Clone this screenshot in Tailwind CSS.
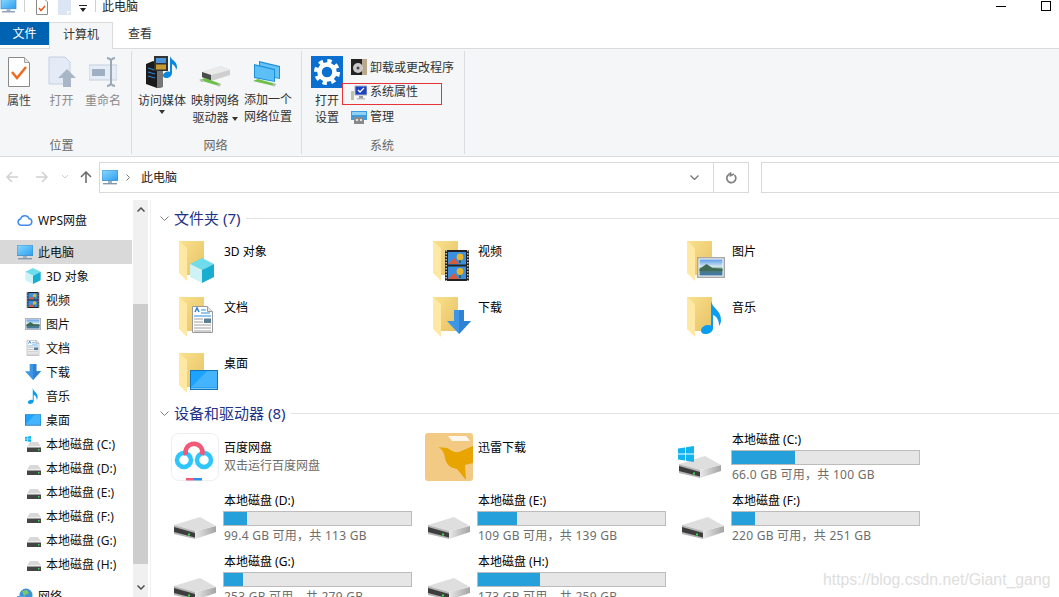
<!DOCTYPE html>
<html lang="en">
<head>
  <meta charset="UTF-8" />
  <title>此电脑</title>
  <script src="https://cdn.jsdelivr.net/npm/@tailwindcss/browser@4"></script>
</head>
<body class="bg-white text-black text-[12px] leading-[18px] font-['Noto_Sans','Noto_Sans_CJK_SC',sans-serif]">

<!-- shared icons -->
<svg class="absolute w-0 h-0" aria-hidden="true">
  <defs>
    <linearGradient id="gFolder" x1="0" x2="1" y1="0" y2="1"><stop offset="0" stop-color="#fae08f"/><stop offset="1" stop-color="#e6c263"/></linearGradient>
    <linearGradient id="gScreen" x1="0" x2="1" y1="0" y2="1"><stop offset="0" stop-color="#8bd8ff"/><stop offset="1" stop-color="#2a9ff0"/></linearGradient>
    <linearGradient id="gDriveSide" x1="0" x2="1" y1="0" y2="0"><stop offset="0" stop-color="#e8e8e8"/><stop offset="1" stop-color="#a4a4a4"/></linearGradient>
    <linearGradient id="gSky" x1="0" x2="0" y1="0" y2="1"><stop offset="0" stop-color="#5e9bea"/><stop offset=".45" stop-color="#d3e8ee"/><stop offset=".6" stop-color="#4f7a6a"/><stop offset="1" stop-color="#3f78ae"/></linearGradient>
  </defs>
  <symbol id="folder" viewBox="0 0 25 40">
    <path d="M0 0h25v34H8z" fill="url(#gFolder)"/>
    <path d="M0 0l8 7v33l-8-8z" fill="#ffe8a3"/>
  </symbol>
  <symbol id="monitor" viewBox="0 0 16 15">
    <rect x="0" y="0" width="16" height="10.5" fill="url(#gScreen)" stroke="#3d8bc4" stroke-width=".8"/>
    <rect x="6" y="11" width="4" height="2" fill="#9fb2c4"/>
    <rect x="1" y="13" width="14" height="1.4" fill="#8297ad"/>
  </symbol>
  <symbol id="cube" viewBox="0 0 24 25">
    <path d="M12 0l12 6-12 6L0 6z" fill="#6fdcec"/>
    <path d="M0 6l12 6v13L0 19z" fill="#cdf3f6"/>
    <path d="M24 6l-12 6v13l12-6z" fill="#19aed0"/>
  </symbol>
  <symbol id="film" viewBox="0 0 24 31">
    <rect width="24" height="31" fill="#222"/>
    <rect x="3" y="2" width="18" height="12.5" fill="#3a8fe0"/>
    <rect x="3" y="16.5" width="18" height="12.5" fill="#3a8fe0"/>
    <path d="M3 14l6-6 5 6zM3 29l6-6 5 6z" fill="#d65a3c"/>
    <circle cx="15" cy="7" r="3.4" fill="#e7b62c"/><circle cx="15" cy="21.5" r="3.4" fill="#e7b62c"/>
    <path d="M15 10v3M15 25v3" stroke="#2a5a2a" stroke-width="1.5"/>
    <path d="M1.200 0v31M22.800 0v31" stroke="#c8c8c8" stroke-width="1.500" stroke-dasharray="1.500 1.500"/>
  </symbol>
  <symbol id="picture" viewBox="0 0 28 21">
    <rect x=".75" y=".75" width="26.5" height="19.5" fill="#fff" stroke="#a8a8a8" stroke-width="1.5"/>
    <rect x="2.500" y="2.500" width="23" height="16" fill="url(#gSky)"/>
    <path d="M2.500 12l7-5 6 4 10 1v2H2.500z" fill="#3f6a55"/>
  </symbol>
  <symbol id="doc" viewBox="0 0 21 27">
    <path d="M.5.5h15l5 5v21H.5z" fill="#fff" stroke="#9a9a9a"/>
    <path d="M15.500.5v5h5" fill="#e6e6e6" stroke="#9a9a9a"/>
    <path d="M3 6l2-4 2 4" fill="none" stroke="#2b7fd0" stroke-width="1.500"/>
    <path d="M9 4h5M9 7h9M2 10h17" stroke="#2b8fdc" stroke-width="1"/>
    <path d="M2 13h9M2 16h9M2 19h17M2 22h17M2 25h17" stroke="#a0a0a0" stroke-width="1"/>
    <rect x="12" y="12.500" width="7" height="4.500" fill="#5c7f96"/>
  </symbol>
  <symbol id="down" viewBox="0 0 24 24">
    <path d="M7 0h10v11h7L12 24 0 11h7z" fill="#3d97e6"/>
    <path d="M12 0h5v11h7L12 24z" fill="#2f83d2"/>
  </symbol>
  <symbol id="note" viewBox="0 0 21 33">
    <path d="M10 0c1 7 10 9 10 19 0 2-.5 4-2 6 .5-6-3-10-6-11v13c0 4-4 6-8 6-3 0-4-2-4-3.500C0 26 4 24 7 24c1 0 2 .2 3 .6z" fill="#0a9df0"/>
  </symbol>
  <symbol id="desktop" viewBox="0 0 28 20">
    <rect width="28" height="20" fill="#1274b8"/>
    <rect x="1" y="1" width="26" height="16.500" fill="#1ca3ff"/>
    <path d="M1 17.500L17 1h10v16.500z" fill="#45b4ff"/>
    <rect x="1" y="18" width="26" height="1" fill="#7cc8f5"/>
  </symbol>
  <symbol id="drive" viewBox="0 0 42 22">
    <path d="M21 14l21-5v6l-21 7z" fill="url(#gDriveSide)"/>
    <path d="M0 8L26 0l16 9-21 5z" fill="#dedede"/>
    <path d="M0 8l21 6v8L0 17z" fill="#b5b5b5"/>
    <path d="M0 10l21 6v4.500L0 15z" fill="#3d3d3d"/>
    <rect x="14" y="16.500" width="2" height="2" fill="#3ddc4a"/>
  </symbol>
  <symbol id="driveSmall" viewBox="0 0 14 10">
    <path d="M3 0h8l3 4.500H0z" fill="#d8d8d8"/>
    <rect x="0" y="4.500" width="14" height="1" fill="#f4f4f4"/>
    <rect x="0" y="5.500" width="14" height="4.500" fill="#454545"/>
    <rect x="11" y="7" width="1.500" height="1.500" fill="#3ddc4a"/>
  </symbol>
  <symbol id="winlogo" viewBox="0 0 16 16">
    <path d="M0 2.500l7-1V7.500H0zM8 1.300L16 0v7.500H8zM0 8.500h7v6l-7-1zM8 8.500h8V16l-8-1.300z" fill="#12b4ef"/>
  </symbol>
</svg>

<div class="relative w-[1059px] h-[597px] overflow-hidden">

  <!-- Title bar -->
  <div class="h-[22px] flex items-start">
    <svg class="w-[17px] h-[14px] mt-[-1px]"><use href="#monitor"/></svg>
    <div class="ml-[7px] w-px h-[12px] bg-[#d0d0d0]"></div>
    <svg class="ml-[11px] w-[12px] h-[15px]" viewBox="0 0 12 15"><path d="M.5-1h8l3 3v12.500H.5z" fill="#fff" stroke="#8c8c8c"/><path d="M3 8l2 2.500L9 6" fill="none" stroke="#e8591c" stroke-width="1.500"/></svg>
    <svg class="ml-[10px] w-[13px] h-[15px]" viewBox="0 0 13 15"><path d="M0 0h13v15H0z" fill="#dbe5f4"/><path d="M9 15v-4h4z" fill="#f4f7fc"/></svg>
    <svg class="ml-[8px] mt-[5px] w-[8px] h-[7px]" viewBox="0 0 8 7"><path d="M0 0h8v1H0zM1 3h6L4 7z" fill="#222"/></svg>
    <div class="ml-[8px] w-px h-[12px] bg-[#d0d0d0]"></div>
    <span class="ml-[6px] mt-[-2px] text-[#222]">此电脑</span>
    <div class="ml-auto mt-[6px] w-[10px] h-px bg-black"></div>
    <div class="ml-[35px] mr-[8px] mt-px w-[10px] h-[10px] border border-black"></div>
  </div>

  <!-- Tabs -->
  <div class="h-[26px] flex items-start relative z-10">
    <div class="w-[49px] h-[23px] bg-[#0063b1] text-white flex items-center justify-center">文件</div>
    <div class="w-[64px] h-[27px] bg-[#f5f6f7] border-x border-t border-[#dadbdc] flex items-center justify-center pb-[3px] text-[#333]">计算机</div>
    <div class="w-[54px] h-[23px] flex items-center justify-center text-[#333]">查看</div>
  </div>

  <!-- Ribbon -->
  <div class="h-[109px] bg-[#f5f6f7] border-y border-[#dadbdc] flex text-[#444] leading-[17px]">
    <section class="w-[132px] my-[2px] border-r border-[#dcdde0] flex flex-col justify-between">
      <div class="flex mt-[5px]">
        <div class="w-[38px] flex flex-col items-center">
          <svg class="w-[22px] h-[32px]" viewBox="0 0 22 32"><path d="M.5 1.500h16l5 5v24H.5z" fill="#fff" stroke="#8a8a8a"/><path d="M16.500 1.500v5h5" fill="#e8e8e8" stroke="#a0a0a0"/><path d="M4 16l5 6 9-11" fill="none" stroke="#ee6a21" stroke-width="2.500"/></svg>
          <span class="mt-[4px]">属性</span>
        </div>
        <div class="w-[47px] flex flex-col items-center text-[#8a8a8a]">
          <svg class="w-[28px] h-[32px]" viewBox="0 0 28 32"><path d="M1 1h16l5 5v14h-6v8H1z" fill="#e4ebf6" stroke="#c4cfe0"/><path d="M19 13l9 9h-5v9h-8v-9h-5z" fill="#a9b6c6"/></svg>
          <span class="mt-[4px]">打开</span>
        </div>
        <div class="w-[36px] flex flex-col items-center text-[#8a8a8a]">
          <svg class="w-[28px] h-[32px]" viewBox="0 0 28 32"><rect x="0" y="9" width="28" height="15" fill="#e6edf6" stroke="#c4cfe0"/><rect x="3" y="13" width="13" height="7" fill="#9fb0c4"/><path d="M18 2c2 0 3 1 4 2 1-1 2-2 4-2M22 4v24M18 30c2 0 3-1 4-2 1 1 2 2 4 2" fill="none" stroke="#9aa8b8" stroke-width="2"/></svg>
          <span class="mt-[4px]">重命名</span>
        </div>
      </div>
      <div class="text-center text-[#666] pr-[8px]">位置</div>
    </section>

    <section class="w-[170px] my-[2px] border-r border-[#dcdde0] flex flex-col justify-between">
      <div class="flex gap-[5px] pl-[6px] mt-[4px]">
        <div class="w-[48px] flex flex-col items-center text-[#333]">
          <svg class="w-[32px] h-[33px]" viewBox="0 0 32 33">
            <path d="M0 9l7-3 10 4v22l-6 1-11-4z" fill="#1b1b1b"/><path d="M11 13l6-3v22l-6 1z" fill="#777"/>
            <path d="M2 13l7 2M2 17l7 2M2 21l7 2" stroke="#2b86d8" stroke-width="1.200"/>
            <rect x="8" y="1" width="14" height="15" fill="#333"/><rect x="10" y="3" width="10" height="5" fill="#4b94d8"/><rect x="10" y="9.500" width="10" height="5" fill="#c99a30"/>
            <path d="M24 1c1 4 7 5 7 11 0 1-.3 2-1 3 .2-3-2-5-4-6v9c0 3-3 5-6 5-2 0-3-1-3-2.500 0-2 3-4 5-4 .7 0 1.400.1 2 .4z" fill="#0a88dc"/>
          </svg>
          <span class="mt-[4px]">访问媒体</span>
          <svg class="mt-px w-[6px] h-[4px]" viewBox="0 0 6 4"><path d="M0 0h6L3 4z" fill="#333"/></svg>
        </div>
        <div class="w-[48px] flex flex-col items-center text-[#333] text-center">
          <svg class="mt-[8px] w-[32px] h-[24px]" viewBox="0 0 32 24">
            <path d="M3 9L22 3l9 4v5L12 18 3 14z" fill="#cfcfcf"/><path d="M3 9L22 3l9 4-19 5z" fill="#eaeaea"/><path d="M3 9l9 3v6l-9-4z" fill="#4a4a4a"/>
            <path d="M0 17l6-2 16 6-2 2z" fill="#6cc04a"/><circle cx="3" cy="17.500" r="1.500" fill="#bbb"/><circle cx="20" cy="22" r="1.500" fill="#bbb"/>
          </svg>
          <span class="mt-[5px]">映射网络</span>
          <span>驱动器 <svg class="inline w-[6px] h-[4px] align-middle" viewBox="0 0 6 4"><path d="M0 0h6L3 4z" fill="#333"/></svg></span>
        </div>
        <div class="w-[48px] flex flex-col items-center text-[#333] text-center">
          <svg class="mt-[6px] w-[30px] h-[26px]" viewBox="0 0 30 26">
            <path d="M6 0l21 5v13L6 14z" fill="#1c8fdc"/><path d="M7 1.500l19 4.500v11L7 13z" fill="#66c2f4"/>
            <path d="M1 3l21 5v13L1 17z" fill="#1c8fdc"/><path d="M2 4.500l19 4.500v11L2 16z" fill="#5cc0f6"/>
            <path d="M0 20l5-2 18 5-2 2z" fill="#6cc04a"/><circle cx="21" cy="24" r="1.500" fill="#bbb"/>
          </svg>
          <span class="mt-[4px]">添加一个</span>
          <span>网络位置</span>
        </div>
      </div>
      <div class="text-center text-[#666] pr-[2px]">网络</div>
    </section>

    <section class="w-[163px] my-[2px] border-r border-[#dcdde0] flex flex-col justify-between">
      <div class="flex mt-[5px]">
        <div class="ml-[9px] w-[32px] flex flex-col items-center text-[#333]">
          <svg class="w-[32px] h-[32px] bg-[#0a6fd0]" viewBox="0 0 32 32">
            <circle cx="16" cy="16" r="7.500" fill="none" stroke="#fff" stroke-width="4.500"/>
            <circle cx="16" cy="16" r="11" fill="none" stroke="#fff" stroke-width="4" stroke-dasharray="4.320 4.320"/>
          </svg>
          <span class="mt-[4px]">打开</span>
          <span>设置</span>
        </div>
        <div class="w-[100px] -ml-px text-[#333]">
          <div class="h-[22px] flex items-center pl-[9px]">
            <svg class="shrink-0 w-[16px] h-[16px]" viewBox="0 0 16 16"><rect width="16" height="16" fill="#222"/><rect x="11" width="5" height="16" fill="#b9a88a"/><circle cx="7" cy="9" r="5" fill="#c9c9c9"/><circle cx="7" cy="9" r="1.500" fill="#444"/></svg>
            <span class="ml-[3px] whitespace-nowrap">卸载或更改程序</span>
          </div>
          <div class="h-[22px] mt-[5px] flex items-center pl-[8px] pb-[2px] border border-[#e8333a]">
            <svg class="shrink-0 w-[16px] h-[16px]" viewBox="0 0 16 16"><rect x="4" y="1" width="12" height="9" fill="#1a3fc0" stroke="#aab4c4"/><path d="M7 5l2 2 4-4" fill="none" stroke="#fff" stroke-width="1.300"/><rect x="8" y="11" width="4" height="2" fill="#999"/><rect x="6" y="13" width="8" height="1.500" fill="#bbb"/><rect x="0" y="6" width="3" height="9" fill="#b9c4a8"/></svg>
            <span class="ml-[3px] mb-[3px]">系统属性</span>
          </div>
          <div class="h-[22px] mt-px flex items-center pl-[9px]">
            <svg class="shrink-0 w-[16px] h-[16px]" viewBox="0 0 16 16"><path d="M0 2h16v9H0z" fill="#3d9be0"/><path d="M1 3h14v3H1z" fill="#8fd0f5"/><rect x="3" y="8" width="10" height="7" fill="#8a8a8a"/><circle cx="6" cy="11" r="1" fill="#fff"/><circle cx="10" cy="11" r="1" fill="#fff"/></svg>
            <span class="ml-[3px] mb-[2px]">管理</span>
          </div>
        </div>
      </div>
      <div class="text-center text-[#666] pr-[2px]">系统</div>
    </section>
  </div>

  <!-- Address row -->
  <div class="h-[43px] flex items-start pt-[5px]">
    <svg class="ml-[6px] mt-[9px] w-[12px] h-[12px]" viewBox="0 0 12 12"><path d="M6 1L1 6l5 5M1 6h11" fill="none" stroke="#d0d0d0" stroke-width="1.500"/></svg>
    <svg class="ml-[18px] mt-[9px] w-[12px] h-[12px]" viewBox="0 0 12 12"><path d="M6 1l5 5-5 5M11 6H0" fill="none" stroke="#d0d0d0" stroke-width="1.500"/></svg>
    <svg class="ml-[14px] mt-[12px] w-[6px] h-[5px]" viewBox="0 0 6 5"><path d="M0 1l3 3 3-3" fill="none" stroke="#d0d0d0"/></svg>
    <svg class="ml-[12px] mt-[9px] w-[12px] h-[12px]" viewBox="0 0 12 12"><path d="M6 12V1M1 6l5-5 5 5" fill="none" stroke="#6d6d6d" stroke-width="1.600"/></svg>
    <div class="ml-[7px] w-[650px] h-[31px] border border-[#d9d9d9] flex items-center">
      <svg class="ml-[2px] w-[16px] h-[15px]"><use href="#monitor"/></svg>
      <svg class="ml-[8px] w-[4px] h-[7px]" viewBox="0 0 4 7"><path d="M.5.5l3 3-3 3" fill="none" stroke="#777"/></svg>
      <span class="ml-[11px] text-[#222]">此电脑</span>
      <svg class="ml-auto mr-[14px] w-[9px] h-[5px]" viewBox="0 0 9 5"><path d="M.5.5l4 4 4-4" fill="none" stroke="#777" stroke-width="1.300"/></svg>
      <div class="w-[35px] h-full border-l border-[#d9d9d9] flex items-center justify-center">
        <svg class="w-[11px] h-[12px]" viewBox="0 0 11 12"><path d="M8.500 3a4.500 4.500 0 1 1-3.500-1.300M4.500.2v3.500L8 2" fill="none" stroke="#808080" stroke-width="1.700"/></svg>
      </div>
    </div>
    <div class="ml-[12px] flex-1 h-[31px] border-y border-l border-[#d9d9d9]"></div>
  </div>

  <div class="flex h-[397px]">
    <!-- Sidebar -->
    <nav class="w-[133px] pt-[8px] shrink-0 text-[#111]">
      <div class="h-[24px] flex items-center pl-[17px]">
        <svg class="w-[16px] h-[12px]" viewBox="0 0 16 12"><path d="M4 11.200a3.200 3.200 0 0 1-.5-6.300A4.500 4.500 0 0 1 12 4.500a3.400 3.400 0 0 1 0 6.700z" fill="none" stroke="#3f8bf0" stroke-width="1.500"/></svg>
        <span class="ml-[5px] mt-[2px]">WPS网盘</span>
      </div>
      <div class="h-[24px] mr-px mt-[8px] bg-[#d9d9d9] flex items-center pl-[17px]">
        <svg class="w-[16px] h-[15px]"><use href="#monitor"/></svg>
        <span class="ml-[5px] mt-[2px]">此电脑</span>
      </div>
      <div class="h-[24px] flex items-center pl-[25px]"><svg class="w-[16px] h-[16px]"><use href="#cube"/></svg><span class="ml-[5px] mt-[2px]">3D 对象</span></div>
      <div class="h-[24px] flex items-center pl-[25px]"><svg class="w-[16px] h-[16px]"><use href="#film"/></svg><span class="ml-[5px] mt-[2px]">视频</span></div>
      <div class="h-[24px] flex items-center pl-[25px]"><svg class="w-[16px] h-[12px]"><use href="#picture"/></svg><span class="ml-[5px] mt-[2px]">图片</span></div>
      <div class="h-[24px] flex items-center pl-[25px]"><svg class="w-[16px] h-[16px]"><use href="#doc"/></svg><span class="ml-[5px] mt-[2px]">文档</span></div>
      <div class="h-[24px] flex items-center pl-[25px]"><svg class="w-[16px] h-[16px]"><use href="#down"/></svg><span class="ml-[5px] mt-[2px]">下载</span></div>
      <div class="h-[24px] flex items-center pl-[25px]"><svg class="w-[16px] h-[16px]"><use href="#note"/></svg><span class="ml-[5px] mt-[2px]">音乐</span></div>
      <div class="h-[24px] flex items-center pl-[25px]"><svg class="w-[16px] h-[12px]"><use href="#desktop"/></svg><span class="ml-[5px] mt-[2px]">桌面</span></div>
      <div class="h-[24px] flex items-center pl-[25px]">
        <span class="relative w-[16px] h-[16px] block">
          <svg class="absolute left-0 top-0 w-[6px] h-[6px]"><use href="#winlogo"/></svg>
          <svg class="absolute left-[2px] top-[6px] w-[14px] h-[10px]"><use href="#driveSmall"/></svg>
        </span>
        <span class="ml-[5px] mt-[2px]">本地磁盘 (C:)</span>
      </div>
      <div class="h-[24px] flex items-center pl-[27px]"><svg class="w-[14px] h-[10px] mt-[4px]"><use href="#driveSmall"/></svg><span class="ml-[5px] mt-[2px]">本地磁盘 (D:)</span></div>
      <div class="h-[24px] flex items-center pl-[27px]"><svg class="w-[14px] h-[10px] mt-[4px]"><use href="#driveSmall"/></svg><span class="ml-[5px] mt-[2px]">本地磁盘 (E:)</span></div>
      <div class="h-[24px] flex items-center pl-[27px]"><svg class="w-[14px] h-[10px] mt-[4px]"><use href="#driveSmall"/></svg><span class="ml-[5px] mt-[2px]">本地磁盘 (F:)</span></div>
      <div class="h-[24px] flex items-center pl-[27px]"><svg class="w-[14px] h-[10px] mt-[4px]"><use href="#driveSmall"/></svg><span class="ml-[5px] mt-[2px]">本地磁盘 (G:)</span></div>
      <div class="h-[24px] flex items-center pl-[27px]"><svg class="w-[14px] h-[10px] mt-[4px]"><use href="#driveSmall"/></svg><span class="ml-[5px] mt-[2px]">本地磁盘 (H:)</span></div>
      <div class="h-[24px] mt-[8px] flex items-center pl-[17px]">
        <svg class="w-[16px] h-[16px]" viewBox="0 0 16 16"><circle cx="9" cy="7" r="6.500" fill="#3d94d8"/><path d="M5 3l5-1 2 3-5 3z" fill="#7cc56a"/><rect x="0" y="8" width="9" height="7" fill="#4aa8ea"/></svg>
        <span class="ml-[5px] mt-[2px]">网络</span>
      </div>
    </nav>

    <!-- Scrollbar -->
    <div class="w-[15px] shrink-0 bg-[#f0f0f0] flex flex-col items-center">
      <svg class="mt-[7px] w-[8px] h-[5px]" viewBox="0 0 8 5"><path d="M.5 4.500L4 1l3.500 3.500" fill="none" stroke="#505050" stroke-width="1.500"/></svg>
      <div class="mt-[92px] w-full h-[260px] bg-[#cdcdcd]"></div>
      <svg class="mt-[21px] w-[8px] h-[5px]" viewBox="0 0 8 5"><path d="M.5.500L4 4l3.500-3.500" fill="none" stroke="#505050" stroke-width="1.500"/></svg>
    </div>

    <!-- Content -->
    <main class="ml-[2px] flex-1 border-l border-[#f0f0f0] overflow-hidden">
      <div class="mt-[7px] h-[22px] flex items-center pl-[9px] text-[15px] text-[#1e3287]">
        <svg class="w-[9px] h-[5px] mr-[5px]" viewBox="0 0 9 5"><path d="M.5.500l4 4 4-4" fill="none" stroke="#808080"/></svg>
        <span>文件夹 (7)</span>
        <div class="ml-[6px] flex-1 h-px bg-[#e3e3e3]"></div>
      </div>

      <div class="mt-[4px] ml-[19px] grid grid-cols-[254px_254px_254px] auto-rows-[56px]">
        <div class="flex">
          <div class="relative w-[54px]"><svg class="ml-[9px] mt-[8px] w-[25px] h-[40px]"><use href="#folder"/></svg><svg class="absolute left-[20px] top-[25px] w-[24px] h-[25px]"><use href="#cube"/></svg></div>
          <span class="pt-[10px]">3D 对象</span>
        </div>
        <div class="flex">
          <div class="relative w-[54px]"><svg class="ml-[9px] mt-[8px] w-[25px] h-[40px]"><use href="#folder"/></svg><svg class="absolute left-[21px] top-[17px] w-[24px] h-[31px]"><use href="#film"/></svg></div>
          <span class="pt-[10px]">视频</span>
        </div>
        <div class="flex">
          <div class="relative w-[54px]"><svg class="ml-[9px] mt-[8px] w-[25px] h-[40px]"><use href="#folder"/></svg><svg class="absolute left-[19px] top-[24px] w-[28px] h-[21px]"><use href="#picture"/></svg></div>
          <span class="pt-[10px]">图片</span>
        </div>
        <div class="flex">
          <div class="relative w-[54px]"><svg class="ml-[9px] mt-[8px] w-[25px] h-[40px]"><use href="#folder"/></svg><svg class="absolute left-[22px] top-[17px] w-[21px] h-[27px]"><use href="#doc"/></svg></div>
          <span class="pt-[10px]">文档</span>
        </div>
        <div class="flex">
          <div class="relative w-[54px]"><svg class="ml-[9px] mt-[8px] w-[25px] h-[40px]"><use href="#folder"/></svg><svg class="absolute left-[23px] top-[21px] w-[24px] h-[24px]"><use href="#down"/></svg></div>
          <span class="pt-[10px]">下载</span>
        </div>
        <div class="flex">
          <div class="relative w-[54px]"><svg class="ml-[9px] mt-[8px] w-[25px] h-[40px]"><use href="#folder"/></svg><svg class="absolute left-[23px] top-[12px] w-[21px] h-[33px]"><use href="#note"/></svg></div>
          <span class="pt-[10px]">音乐</span>
        </div>
        <div class="flex">
          <div class="relative w-[54px]"><svg class="ml-[9px] mt-[8px] w-[25px] h-[40px]"><use href="#folder"/></svg><svg class="absolute left-[20px] top-[25px] w-[28px] h-[20px]"><use href="#desktop"/></svg></div>
          <span class="pt-[10px]">桌面</span>
        </div>
      </div>

      <div class="mt-px h-[22px] flex items-center pl-[9px] text-[15px] text-[#1e3287]">
        <svg class="w-[9px] h-[5px] mr-[5px]" viewBox="0 0 9 5"><path d="M.5.500l4 4 4-4" fill="none" stroke="#808080"/></svg>
        <span>设备和驱动器 (8)</span>
        <div class="ml-[6px] flex-1 h-px bg-[#e3e3e3]"></div>
      </div>

      <div class="mt-[6px] ml-[19px] grid grid-cols-[254px_254px_254px] auto-rows-[61px]">
        <div class="flex">
          <div class="w-[54px]">
            <svg class="ml-px mt-[3px] w-[48px] h-[48px]" viewBox="0 0 48 48">
              <rect x=".5" y=".5" width="47" height="47" rx="7" fill="#fff" stroke="#eee"/>
              <circle cx="13" cy="27" r="7" fill="none" stroke="#2fc6fc" stroke-width="4.500"/>
              <circle cx="33" cy="27" r="7" fill="none" stroke="#2fc6fc" stroke-width="4.500"/>
              <path d="M15 22a8.500 8.500 0 1 1 16 0" fill="none" stroke="#f05a78" stroke-width="4.500"/>
              <rect x="15" y="45" width="8" height="2.500" fill="#f05a78"/><rect x="23" y="45" width="8" height="2.500" fill="#2b8fe8"/>
            </svg>
          </div>
          <div class="pt-[9px]"><div>百度网盘</div><div class="text-[#6d6d6d]">双击运行百度网盘</div></div>
        </div>
        <div class="flex">
          <div class="w-[54px]">
            <svg class="ml-px mt-[3px] w-[48px] h-[48px]" viewBox="0 0 48 48">
              <rect width="48" height="48" rx="3" fill="#f2ca84"/>
              <path d="M23 3h18l4 5H27z" fill="#fff" opacity=".85"/>
              <path d="M13 14l9 1c3 1 6 5 12 4l14-6v17l-8 2 1 15-9-11c-7-1-11-5-12-11-.5-5-3-9-7-11z" fill="#e8a400"/>
            </svg>
          </div>
          <div class="pt-[9px]">迅雷下载</div>
        </div>
        <div class="flex">
          <div class="relative w-[54px]">
            <svg class="absolute left-0 top-[16px] w-[16px] h-[16px]"><use href="#winlogo"/></svg>
            <svg class="ml-px mt-[26px] w-[42px] h-[22px]"><use href="#drive"/></svg>
          </div>
          <div class="pt-px">
            <div class="whitespace-nowrap">本地磁盘 (C:)</div>
            <div class="mt-px -ml-px w-[189px] h-[15px] bg-[#e6e6e6] border border-[#bcbcbc]"><div class="h-full bg-[#26a0da] w-[63px]"></div></div>
            <div class="pt-px text-[#6d6d6d] tracking-[0.25px] whitespace-nowrap">66.0 GB 可用，共 100 GB</div>
          </div>
        </div>

        <div class="flex">
          <div class="w-[54px]"><svg class="ml-[4px] mt-[26px] w-[42px] h-[22px]"><use href="#drive"/></svg></div>
          <div class="pt-px">
            <div class="whitespace-nowrap">本地磁盘 (D:)</div>
            <div class="mt-px -ml-px w-[189px] h-[15px] bg-[#e6e6e6] border border-[#bcbcbc]"><div class="h-full bg-[#26a0da] w-[23px]"></div></div>
            <div class="pt-px text-[#6d6d6d] tracking-[0.25px] whitespace-nowrap">99.4 GB 可用，共 113 GB</div>
          </div>
        </div>
        <div class="flex">
          <div class="w-[54px]"><svg class="ml-[4px] mt-[26px] w-[42px] h-[22px]"><use href="#drive"/></svg></div>
          <div class="pt-px">
            <div class="whitespace-nowrap">本地磁盘 (E:)</div>
            <div class="mt-px -ml-px w-[189px] h-[15px] bg-[#e6e6e6] border border-[#bcbcbc]"><div class="h-full bg-[#26a0da] w-[39px]"></div></div>
            <div class="pt-px text-[#6d6d6d] tracking-[0.25px] whitespace-nowrap">109 GB 可用，共 139 GB</div>
          </div>
        </div>
        <div class="flex">
          <div class="w-[54px]"><svg class="ml-[4px] mt-[26px] w-[42px] h-[22px]"><use href="#drive"/></svg></div>
          <div class="pt-px">
            <div class="whitespace-nowrap">本地磁盘 (F:)</div>
            <div class="mt-px -ml-px w-[189px] h-[15px] bg-[#e6e6e6] border border-[#bcbcbc]"><div class="h-full bg-[#26a0da] w-[23px]"></div></div>
            <div class="pt-px text-[#6d6d6d] tracking-[0.25px] whitespace-nowrap">220 GB 可用，共 251 GB</div>
          </div>
        </div>

        <div class="flex">
          <div class="w-[54px]"><svg class="ml-[4px] mt-[26px] w-[42px] h-[22px]"><use href="#drive"/></svg></div>
          <div class="pt-px">
            <div class="whitespace-nowrap">本地磁盘 (G:)</div>
            <div class="mt-px -ml-px w-[189px] h-[15px] bg-[#e6e6e6] border border-[#bcbcbc]"><div class="h-full bg-[#26a0da] w-[19px]"></div></div>
            <div class="pt-px text-[#6d6d6d] tracking-[0.25px] whitespace-nowrap">253 GB 可用，共 279 GB</div>
          </div>
        </div>
        <div class="flex">
          <div class="w-[54px]"><svg class="ml-[4px] mt-[26px] w-[42px] h-[22px]"><use href="#drive"/></svg></div>
          <div class="pt-px">
            <div class="whitespace-nowrap">本地磁盘 (H:)</div>
            <div class="mt-px -ml-px w-[189px] h-[15px] bg-[#e6e6e6] border border-[#bcbcbc]"><div class="h-full bg-[#26a0da] w-[62px]"></div></div>
            <div class="pt-px text-[#6d6d6d] tracking-[0.25px] whitespace-nowrap">173 GB 可用，共 259 GB</div>
          </div>
        </div>
      </div>
    </main>
  </div>

  <!-- Watermark -->
  <div class="absolute left-[823px] top-[570px] text-[15.8px] leading-[20px] text-[#dedede] font-['Liberation_Sans',sans-serif]">https://blog.csdn.net/Giant_gang</div>
</div>
</body>
</html>
